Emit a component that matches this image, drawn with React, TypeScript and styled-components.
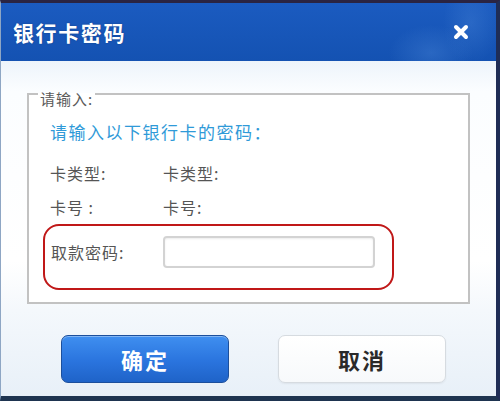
import styled, { createGlobalStyle } from 'styled-components';

const GlobalStyle = createGlobalStyle`
  html, body {
    margin: 0;
    padding: 0;
    background: #ffffff;
  }
  body {
    font-family: "Noto Sans CJK SC", "Noto Sans", sans-serif;
  }
`;

const Window = styled.div`
  width: 500px;
  height: 401px;
  box-sizing: border-box;
  display: flex;
  flex-direction: column;
  border-top: 3px solid #2a2442;
  border-right: 4px solid #1f2d56;
  border-bottom: 5px solid #1e3450;
  border-left: 1px solid #8ea6c4;
  overflow: hidden;
`;

const TitleBar = styled.div`
  height: 58px;
  flex: none;
  display: flex;
  align-items: center;
  justify-content: space-between;
  padding: 0 26px 0 12px;
  background:
    radial-gradient(ellipse 60px 40px at 430px 50px, rgba(80, 140, 220, 0.35), transparent 70%),
    radial-gradient(ellipse 40px 60px at 470px 20px, rgba(80, 140, 220, 0.3), transparent 70%),
    linear-gradient(#1b5bc0, #1452b2);
`;

const Title = styled.h1`
  margin: 0;
  color: #ffffff;
  font-size: 21px;
  font-weight: 700;
  letter-spacing: 1.6px;
  text-shadow: 0 0 2px rgba(0, 0, 0, 0.25);
`;

const CloseButton = styled.button`
  width: 18px;
  height: 18px;
  padding: 0;
  border: none;
  background: none;
  display: flex;
  align-items: center;
  justify-content: center;
  cursor: pointer;
`;

const Body = styled.div`
  flex: 1;
  display: flex;
  flex-direction: column;
  padding: 0 26px;
  background: linear-gradient(#edf4fb 0, #fbfdff 30px, #ffffff 200px, #f4f8fc 250px, #e8f0f8 100%);
`;

const Group = styled.fieldset`
  margin: 19px 0 0;
  padding: 14px 20px 12px 21px;
  min-inline-size: 0;
  border: 2px solid #c2c2c2;
  background: #ffffff;
  display: flex;
  flex-direction: column;
`;

const Legend = styled.legend`
  padding: 10px 2px 0;
  margin-left: -12px;
  line-height: 18px;
  font-size: 15px;
  color: #5a5a5a;
  letter-spacing: 1px;
`;

const Hint = styled.div`
  line-height: 20px;
  font-size: 17px;
  letter-spacing: 1.5px;
  color: #2f9ad8;
`;

const InfoRow = styled.div<{ gap: number }>`
  display: grid;
  grid-template-columns: 113px 1fr;
  margin-top: ${({ gap }) => gap}px;
  line-height: 20px;
  font-size: 16px;
  letter-spacing: 1px;
  color: #555555;
`;

const PasswordBox = styled.div`
  margin: 7px 0 0 -7px;
  width: 351px;
  box-sizing: border-box;
  display: grid;
  grid-template-columns: 112px 212px;
  align-items: center;
  padding: 10px 0 20px 6px;
  border: 2px solid #c01818;
  border-radius: 16px;
  font-size: 16px;
  letter-spacing: 1px;
  color: #555555;
`;

const PasswordInput = styled.input`
  height: 32px;
  box-sizing: border-box;
  border: 2px solid #d3d3d3;
  border-radius: 4px;
  background: #ffffff;
  box-shadow: inset 0 1px 2px rgba(0, 0, 0, 0.08);
  outline: none;
`;

const Footer = styled.div`
  display: flex;
  align-items: center;
  gap: 49px;
  padding: 31px 0 0 34px;
`;

const ActionButton = styled.button<{ primary?: boolean }>`
  width: 168px;
  height: 48px;
  box-sizing: border-box;
  border-radius: 7px;
  font-family: "Noto Sans CJK SC", sans-serif;
  font-size: 22px;
  font-weight: 700;
  letter-spacing: 2px;
  cursor: pointer;
  border: 1px solid ${({ primary }) => (primary ? '#1c4f9c' : '#d6dbe0')};
  color: ${({ primary }) => (primary ? '#ffffff' : '#2a2a2a')};
  background: ${({ primary }) =>
    primary ? 'linear-gradient(#3f8ff0, #2a74de 55%, #1f63c8)' : 'linear-gradient(#ffffff, #f7f9fb)'};
  box-shadow: ${({ primary }) =>
    primary ? 'inset 0 1px 0 rgba(255,255,255,0.35)' : '0 1px 2px rgba(0,0,0,0.06)'};
`;

const CloseIcon = () => (
  <svg width="16" height="16" viewBox="0 0 16 16">
    <path d="M3 3 L13 13 M13 3 L3 13" stroke="#ffffff" strokeWidth="4" strokeLinecap="round" />
  </svg>
);

export default function App() {
  return (
    <>
      <GlobalStyle />
      <Window>
        <TitleBar>
          <Title>银行卡密码</Title>
          <CloseButton aria-label="关闭">
            <CloseIcon />
          </CloseButton>
        </TitleBar>
        <Body>
          <Group>
            <Legend>请输入:</Legend>
            <Hint>请输入以下银行卡的密码：</Hint>
            <InfoRow gap={21}>
              <span>卡类型:</span>
              <span>卡类型:</span>
            </InfoRow>
            <InfoRow gap={14}>
              <span>卡号 :</span>
              <span>卡号:</span>
            </InfoRow>
            <PasswordBox>
              <span>取款密码:</span>
              <PasswordInput type="password" />
            </PasswordBox>
          </Group>
          <Footer>
            <ActionButton primary>确定</ActionButton>
            <ActionButton>取消</ActionButton>
          </Footer>
        </Body>
      </Window>
    </>
  );
}
